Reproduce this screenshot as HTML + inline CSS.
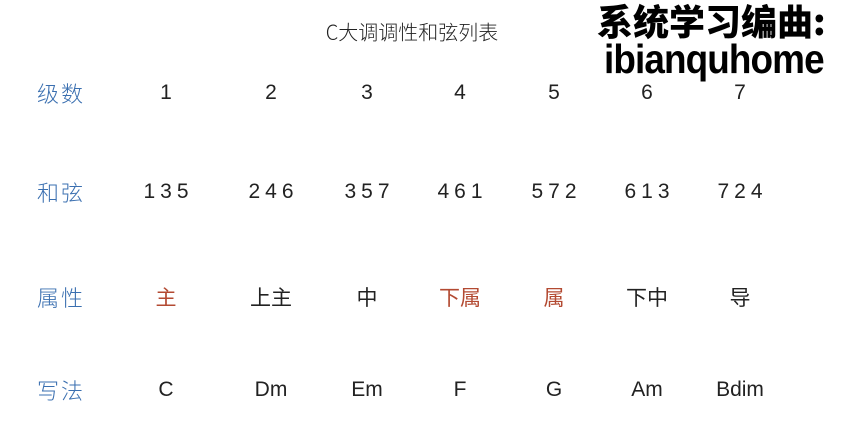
<!DOCTYPE html>
<html><head><meta charset="utf-8"><style>
body{margin:0;width:845px;height:423px;background:#fff;position:relative;overflow:hidden;font-family:"Liberation Sans","Noto Sans CJK SC",sans-serif;color:#222}
.t{position:absolute;transform:translate(-50%,-50%);white-space:nowrap;font-size:21px}
.d{letter-spacing:5px;text-indent:5px}
.l{position:absolute;transform:translateY(-50%);left:37px;color:#3a6fb0;font-size:22px;font-family:"Noto Sans CJK SC",sans-serif;font-weight:300;letter-spacing:2px}
.r{color:#b34a32}
.w{position:absolute;font-weight:900;color:#000;font-family:"Liberation Sans","Noto Sans CJK SC",sans-serif;white-space:nowrap}
</style></head><body>
<div class="t" style="left:412px;top:31px;font-size:20px;font-family:'Noto Sans CJK SC',sans-serif;font-weight:300">C大调调性和弦列表</div>
<div class="w" style="left:597px;top:0px;font-size:36px;line-height:40px;font-family:'Noto Sans CJK SC',sans-serif">系统学习编曲:</div>
<div class="w" style="left:604px;top:36px;font-size:41px;line-height:46px;letter-spacing:-1px;transform:scaleX(0.9);transform-origin:left">ibianquhome</div>
<div class="l" style="top:93px">级数</div>
<div class="l" style="top:192px">和弦</div>
<div class="l" style="top:297px">属性</div>
<div class="l" style="top:390px">写法</div>

<div class="t" style="left:166px;top:93px">1</div>
<div class="t" style="left:271px;top:93px">2</div>
<div class="t" style="left:367px;top:93px">3</div>
<div class="t" style="left:460px;top:93px">4</div>
<div class="t" style="left:554px;top:93px">5</div>
<div class="t" style="left:647px;top:93px">6</div>
<div class="t" style="left:740px;top:93px">7</div>

<div class="t d" style="left:166px;top:192px">135</div>
<div class="t d" style="left:271px;top:192px">246</div>
<div class="t d" style="left:367px;top:192px">357</div>
<div class="t d" style="left:460px;top:192px">461</div>
<div class="t d" style="left:554px;top:192px">572</div>
<div class="t d" style="left:647px;top:192px">613</div>
<div class="t d" style="left:740px;top:192px">724</div>

<div class="t r" style="left:166px;top:297px">主</div>
<div class="t" style="left:271px;top:297px">上主</div>
<div class="t" style="left:367px;top:297px">中</div>
<div class="t r" style="left:460px;top:297px">下属</div>
<div class="t r" style="left:554px;top:297px">属</div>
<div class="t" style="left:647px;top:297px">下中</div>
<div class="t" style="left:740px;top:297px">导</div>

<div class="t" style="left:166px;top:390px">C</div>
<div class="t" style="left:271px;top:390px">Dm</div>
<div class="t" style="left:367px;top:390px">Em</div>
<div class="t" style="left:460px;top:390px">F</div>
<div class="t" style="left:554px;top:390px">G</div>
<div class="t" style="left:647px;top:390px">Am</div>
<div class="t" style="left:740px;top:390px">Bdim</div>
</body></html>
